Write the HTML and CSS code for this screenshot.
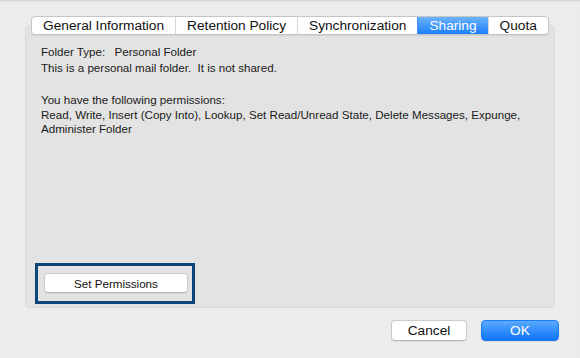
FILE: index.html
```html
<!DOCTYPE html>
<html lang="en">
<head>
  <meta charset="UTF-8">
  <title>Folder Properties - Sharing</title>
  <link rel="stylesheet" href="styles.css">
</head>
<body>
  <div class="dialog">
    <div class="tabview">
      <div class="tabs">
        <div class="tab">General Information</div>
        <div class="tab">Retention Policy</div>
        <div class="tab">Synchronization</div>
        <div class="tab selected">Sharing</div>
        <div class="tab">Quota</div>
      </div>

      <div class="panel">
        <div class="info">
          <p class="line"><span class="label">Folder Type:</span> Personal Folder</p>
          <p class="line">This is a personal mail folder.&nbsp; It is not shared.</p>
        </div>

        <div class="perms">
          <p class="line">You have the following permissions:</p>
          <p class="perm-list">Read, Write, Insert (Copy Into), Lookup, Set Read/Unread State, Delete Messages, Expunge, Administer Folder</p>
        </div>

        <div class="focus-ring">
          <button class="btn btn-wide">Set Permissions</button>
        </div>
      </div>
    </div>

    <div class="actions">
      <button class="btn btn-cancel">Cancel</button>
      <button class="btn btn-ok">OK</button>
    </div>
  </div>
</body>
</html>
```

FILE: styles.css
```css
body, html {
  margin: 0;
  padding: 0;
  width: 100%;
  height: 100%;
  background-color: #ececec;
  font-family: 'Liberation Sans', Arial, sans-serif;
  color: #1a1a1a;
}

.dialog {
  height: 358px;
  box-sizing: border-box;
  padding: 16px 21px 0 25px;
  box-shadow: inset 0 2px 2px -1px rgba(0,0,0,0.12);
}

.tabview {
  width: 530px;
  display: flex;
  flex-direction: column;
}

.tabs {
  position: relative;
  z-index: 1;
  align-self: center;
  display: flex;
  height: 17px;
  background-color: white;
  border: 1px solid #c6c6c6;
  border-radius: 4px;
  box-shadow: 0 1px 1px rgba(0,0,0,0.08);
  overflow: hidden;
}

.tab {
  font-size: 13.7px;
  line-height: 17px;
  padding: 0 11px;
  border-left: 1px solid #d6d6d6;
  color: #111;
}

.tab:first-child {
  border-left: none;
}

.tab.selected {
  color: white;
  border-left-color: #3d8ffb;
  background-image: linear-gradient(to bottom, #6cb3fa 0%, #1c7ffa 100%);
}

.panel {
  margin-top: -10px;
  height: 283px;
  box-sizing: border-box;
  padding: 18px 0 3px 15px;
  background-color: #e3e3e3;
  border: 1px solid #dadada;
  border-radius: 4px;
  display: flex;
  flex-direction: column;
}

.line {
  margin: 0;
  font-size: 11.6px;
  line-height: 16px;
}

.label {
  margin-right: 6px;
}

.perms {
  margin-top: 16px;
}

.perm-list {
  margin: 0;
  font-size: 11.6px;
  line-height: 14px;
  padding-right: 10px;
}

.focus-ring {
  margin-top: auto;
  margin-left: -6px;
  width: 144px;
  padding: 7px 4px 8px 6px;
  border: 3px solid #0c4679;
}

.btn {
  font-family: 'Liberation Sans', Arial, sans-serif;
  font-size: 13.7px;
  height: 21px;
  padding: 0;
  background-color: white;
  color: #111;
  border: 1px solid #cbcbcb;
  border-bottom-color: #b9b9b9;
  border-radius: 4px;
  box-shadow: 0 1px 1px rgba(0,0,0,0.08);
}

.btn-wide {
  width: 144px;
  height: 20px;
  font-size: 11.6px;
}

.actions {
  display: flex;
  justify-content: flex-end;
  gap: 14px;
  margin-top: 12px;
}

.btn-cancel {
  width: 76px;
}

.btn-ok {
  width: 78px;
  color: white;
  border: 1px solid #1b7cf7;
  background-image: linear-gradient(to bottom, #5aaafc 0%, #0f74fa 100%);
}
```
